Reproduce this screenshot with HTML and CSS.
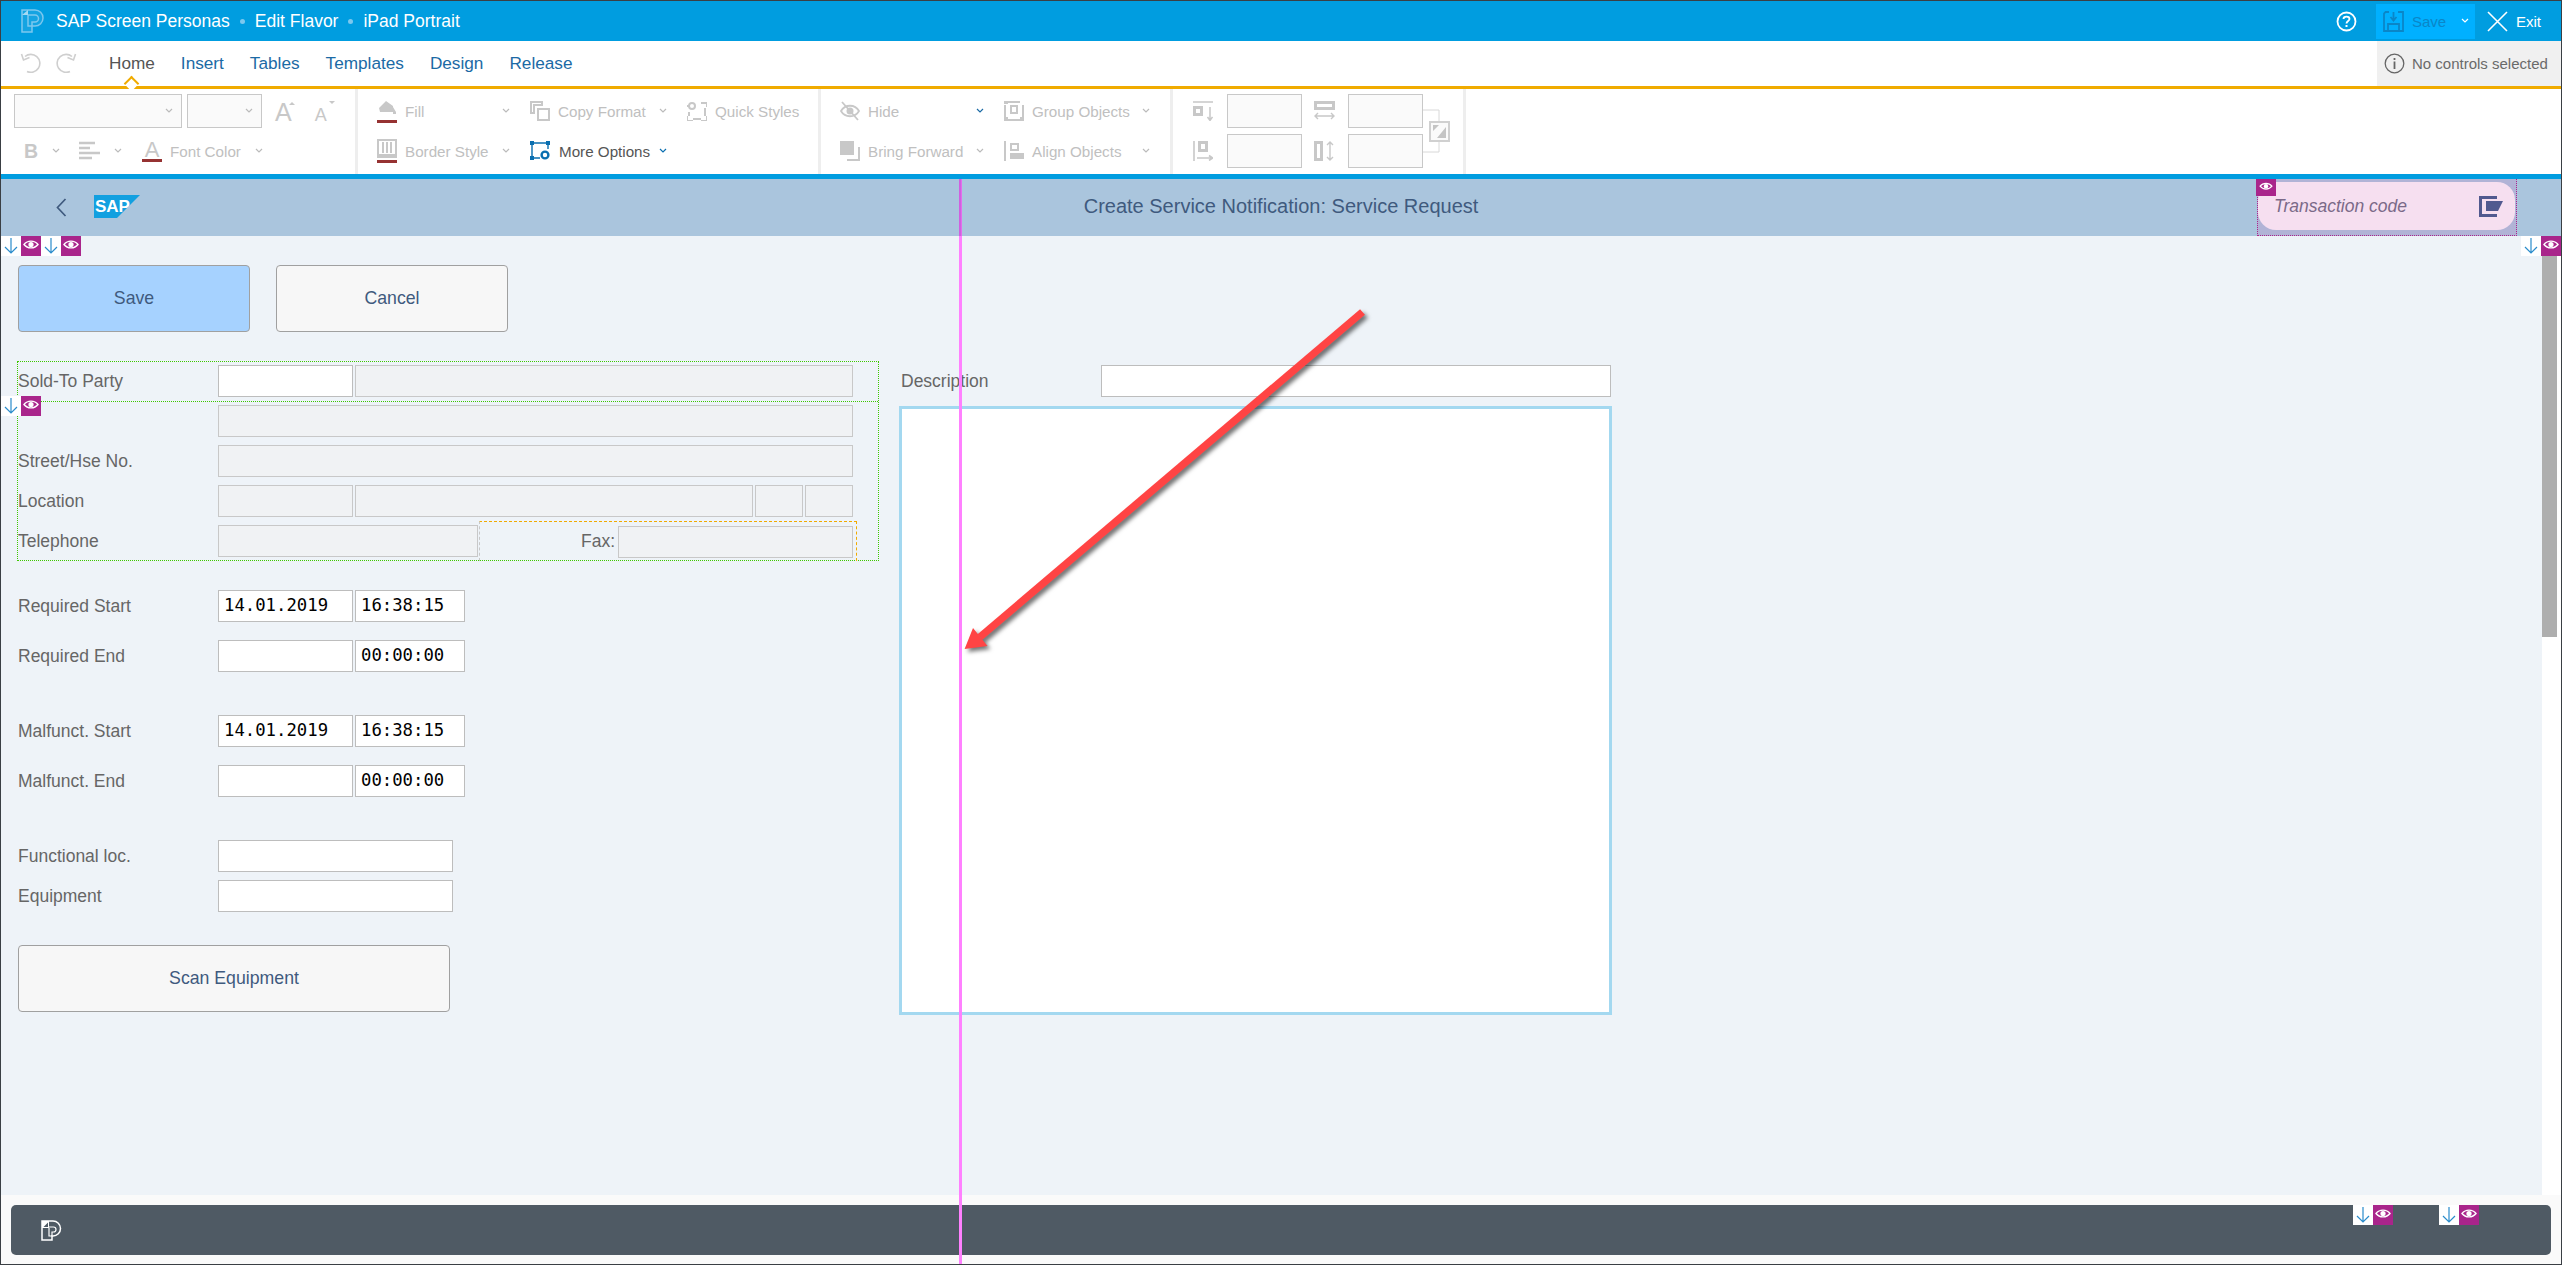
FILE: index.html
```html
<!DOCTYPE html>
<html lang="en">
<head>
    <meta charset="UTF-8">
    <title>SAP Screen Personas - Edit Flavor</title>
    <link rel="stylesheet" href="styles.css">
</head>
<body>
<svg class="defs" width="0" height="0">
    <symbol id="i-eye" viewBox="0 0 20 20">
        <path d="M3 8.5C6.5 4 13.5 4 17 8.5C13.5 13 6.5 13 3 8.5Z" fill="none" stroke="#fff" stroke-width="1.4"/>
        <circle cx="10" cy="8.5" r="2.6" fill="#fff"/>
    </symbol>
    <symbol id="i-down" viewBox="0 0 20 20">
        <path d="M10 2V17M4 11L10 17L16 11" fill="none" stroke="#2a8ccb" stroke-width="1.2"/>
    </symbol>
    <symbol id="i-chev" viewBox="0 0 8 6">
        <path d="M1 1L4 4L7 1" fill="none" stroke="currentColor" stroke-width="1.2"/>
    </symbol>
</svg>

<div class="app">
    <header class="titlebar">
        <svg class="plogo" width="23" height="24" viewBox="0 0 23 24">
            <path d="M1 1H14A8 8 0 0 1 14 17H11V23H1Z" fill="rgba(255,255,255,0.08)" stroke="#7cc8ee" stroke-width="1.5"/>
            <path d="M1 6L7 1V6Z" fill="#a5daf3"/>
            <path d="M7 6H14A3.5 3.5 0 0 1 14 13H11V17M7 6V17H11" fill="none" stroke="#7cc8ee" stroke-width="1.5"/>
        </svg>
        <span class="crumb">SAP Screen Personas</span><span class="dot"></span>
        <span class="crumb">Edit Flavor</span><span class="dot"></span>
        <span class="crumb">iPad Portrait</span>
        <div class="titlebar-right">
            <svg class="help" width="21" height="21" viewBox="0 0 21 21">
                <circle cx="10.5" cy="10.5" r="9" fill="none" stroke="#fff" stroke-width="1.8"/>
                <path d="M7.5 8C7.5 4.8 13.5 4.8 13.5 8C13.5 10 10.5 10 10.5 12.5" fill="none" stroke="#fff" stroke-width="1.8"/>
                <rect x="9.5" y="14" width="2" height="2" fill="#fff"/>
            </svg>
            <div class="savebtn">
                <svg width="21" height="21" viewBox="0 0 21 21">
                    <path d="M6 1H2.5L1 2.5V20H20V1H15M5 20V13H16V20M10.5 1V9M7.5 6L10.5 9.5L13.5 6" fill="none" stroke="#0a86c8" stroke-width="1.8"/>
                </svg>
                <span class="savebtn-text">Save</span>
                <svg class="savebtn-chev" width="8" height="6"><use href="#i-chev"/></svg>
            </div>
            <svg class="exit-x" width="21" height="21" viewBox="0 0 21 21">
                <path d="M1 1L20 20M20 1L1 20" stroke="#fff" stroke-width="1.6"/>
            </svg>
            <span class="exit-text">Exit</span>
        </div>
    </header>

    <nav class="tabs">
        <svg class="undo" width="21" height="20" viewBox="0 0 21 20">
            <path d="M5 3.500A9 9 0 1 1 7 18.500" fill="none" stroke="#cfcfcf" stroke-width="1.6"/>
            <path d="M1.500 1L3.500 7L9.500 4.500" fill="none" stroke="#cfcfcf" stroke-width="1.6"/>
        </svg>
        <svg class="redo" width="21" height="20" viewBox="0 0 21 20">
            <path d="M16 3.500A9 9 0 1 0 14 18.500" fill="none" stroke="#cfcfcf" stroke-width="1.6"/>
            <path d="M19.500 1L17.500 7L11.500 4.500" fill="none" stroke="#cfcfcf" stroke-width="1.6"/>
        </svg>
        <a class="tab tab-active">Home</a>
        <a class="tab">Insert</a>
        <a class="tab">Tables</a>
        <a class="tab">Templates</a>
        <a class="tab">Design</a>
        <a class="tab">Release</a>
        <div class="status">
            <svg width="21" height="21" viewBox="0 0 21 21">
                <circle cx="10.5" cy="10.5" r="9.3" fill="none" stroke="#666" stroke-width="1.3"/>
                <rect x="9.6" y="5" width="1.8" height="2" fill="#666"/>
                <rect x="9.6" y="8.5" width="1.8" height="7.5" fill="#666"/>
            </svg>
            <span>No controls selected</span>
        </div>
    </nav>

    <section class="ribbon">
        <div class="rgroup rgroup-font">
            <div class="rrow">
                <div class="rbox rbox-font"><svg width="8" height="6"><use href="#i-chev"/></svg></div>
                <div class="rbox rbox-size"><svg width="8" height="6"><use href="#i-chev"/></svg></div>
                <span class="glyph-a glyph-up">A</span>
                <span class="glyph-a glyph-small">A</span>
            </div>
            <div class="rrow rrow-tools">
                <span class="glyph-b">B</span>
                <svg class="chev" width="8" height="6"><use href="#i-chev"/></svg>
                <svg class="align-icon" width="21" height="20" viewBox="0 0 21 20">
                    <path d="M0 2H16M0 7H11M0 12H21M0 17H13" stroke="#c8c8c8" stroke-width="2.4"/>
                </svg>
                <svg class="chev" width="8" height="6"><use href="#i-chev"/></svg>
                <span class="color-a">A</span>
                <span class="rtext rtext-color">Font Color</span>
                <svg class="chev" width="8" height="6"><use href="#i-chev"/></svg>
            </div>
        </div>

        <div class="rgroup rgrid rgrid-format">
            <div class="ritem">
                <svg class="ricon" width="20" height="24" viewBox="0 0 20 24">
                    <path d="M2 9L9 2L16 7V13H3ZM16 8L19 13V15H16Z" fill="#c8c8c8"/>
                    <rect y="21" width="20" height="3" fill="#963232"/>
                </svg>
                <span class="rtext">Fill</span>
                <svg class="chev" width="8" height="6"><use href="#i-chev"/></svg>
            </div>
            <div class="ritem">
                <svg class="ricon" width="20" height="20" viewBox="0 0 20 20">
                    <path d="M1 12V1H12V4H4V12ZM8 8H19V19H8Z" fill="none" stroke="#c8c8c8" stroke-width="2"/>
                </svg>
                <span class="rtext">Copy Format</span>
                <svg class="chev" width="8" height="6"><use href="#i-chev"/></svg>
            </div>
            <div class="ritem">
                <svg class="ricon" width="20" height="20" viewBox="0 0 20 20">
                    <path d="M2 5H0M14 2H20V6M18 7V15M20 15V20H14M14 18H6M6 20H0V15M2 15V11" fill="none" stroke="#c8c8c8" stroke-width="2"/>
                    <circle cx="5" cy="5" r="3" fill="none" stroke="#c8c8c8" stroke-width="2"/>
                </svg>
                <span class="rtext">Quick Styles</span>
            </div>
            <div class="ritem">
                <svg class="ricon" width="20" height="24" viewBox="0 0 20 24">
                    <path d="M1 1H19V16H1ZM0 18H20M6 3V14M10 3V14M14 3V14" fill="none" stroke="#c8c8c8" stroke-width="2"/>
                    <rect y="21" width="20" height="3" fill="#963232"/>
                </svg>
                <span class="rtext">Border Style</span>
                <svg class="chev" width="8" height="6"><use href="#i-chev"/></svg>
            </div>
            <div class="ritem ritem-active">
                <svg class="ricon" width="21" height="20" viewBox="0 0 21 20">
                    <path d="M3 2H17M2 3V15M4 17H10M18 3V8" fill="none" stroke="#0a6fb0" stroke-width="1.4"/>
                    <path d="M0 0H4V4H0ZM16 0H20V4H16ZM0 15H4V19H0Z" fill="#0a6fb0"/>
                    <circle cx="15" cy="14" r="3.4" fill="none" stroke="#0a6fb0" stroke-width="2.4"/>
                </svg>
                <span class="rtext">More Options</span>
                <svg class="chev" width="8" height="6"><use href="#i-chev"/></svg>
            </div>
        </div>

        <div class="rgroup rgrid rgrid-arrange">
            <div class="ritem">
                <svg class="ricon" width="20" height="20" viewBox="0 0 20 20">
                    <path d="M1 10C5 3 15 3 19 10C15 17 5 17 1 10ZM2 1L18 19" fill="none" stroke="#c8c8c8" stroke-width="1.8"/>
                    <circle cx="10" cy="10" r="3.5" fill="#c8c8c8"/>
                </svg>
                <span class="rtext">Hide</span>
                <svg class="chev chev-blue" width="8" height="6"><use href="#i-chev"/></svg>
            </div>
            <div class="ritem">
                <svg class="ricon" width="20" height="20" viewBox="0 0 20 20">
                    <path d="M1 4V16M4 1H16M19 4V16M4 19H16M7 5H13V12H7Z" fill="none" stroke="#c8c8c8" stroke-width="2"/>
                    <path d="M0 0H4V3H0ZM0 16H4V20H0ZM16 16H20V20H16Z" fill="#c8c8c8"/>
                </svg>
                <span class="rtext">Group Objects</span>
                <svg class="chev" width="8" height="6"><use href="#i-chev"/></svg>
            </div>
            <div class="ritem">
                <svg class="ricon" width="20" height="20" viewBox="0 0 20 20">
                    <rect width="14" height="14" fill="#c8c8c8"/>
                    <path d="M19 6V19H7" fill="none" stroke="#c8c8c8" stroke-width="2"/>
                </svg>
                <span class="rtext">Bring Forward</span>
                <svg class="chev" width="8" height="6"><use href="#i-chev"/></svg>
            </div>
            <div class="ritem">
                <svg class="ricon" width="20" height="20" viewBox="0 0 20 20">
                    <path d="M1 0V20" stroke="#c8c8c8" stroke-width="2"/>
                    <path d="M7 3H14V9H7Z" fill="none" stroke="#c8c8c8" stroke-width="2"/>
                    <rect x="6" y="12" width="14" height="6" fill="#c8c8c8"/>
                </svg>
                <span class="rtext">Align Objects</span>
                <svg class="chev" width="8" height="6"><use href="#i-chev"/></svg>
            </div>
        </div>

        <div class="rgroup rgroup-size">
            <div class="rrow">
                <svg class="size-icon" width="20" height="20" viewBox="0 0 20 20">
                    <path d="M0 1H20M17 6V19M14.500 16L17 19.500L19.500 16" fill="none" stroke="#c8c8c8" stroke-width="1.5"/>
                    <path d="M0 5H10V15H0ZM3 8V12H7V8Z" fill="#c8c8c8" fill-rule="evenodd"/>
                </svg>
                <div class="rbox rbox-num"></div>
                <svg class="size-icon size-icon-2" width="21" height="20" viewBox="0 0 21 20">
                    <path d="M0 0H21V9H0ZM3 3V6H18V3Z" fill="#c8c8c8" fill-rule="evenodd"/>
                    <path d="M1 15H20M4 12L1 15L4 18M17 12L20 15L17 18" fill="none" stroke="#c8c8c8" stroke-width="1.4"/>
                </svg>
                <div class="rbox rbox-num"></div>
            </div>
            <div class="rrow">
                <svg class="size-icon" width="20" height="20" viewBox="0 0 20 20">
                    <path d="M1 0V20M4 17H19.500M16 14.500L19.500 17L16 19.500" fill="none" stroke="#c8c8c8" stroke-width="1.6"/>
                    <path d="M5 0H15V11H5ZM8 3V8H12V3Z" fill="#c8c8c8" fill-rule="evenodd"/>
                </svg>
                <div class="rbox rbox-num"></div>
                <svg class="size-icon size-icon-2" width="21" height="20" viewBox="0 0 21 20">
                    <path d="M0 0H9V20H0ZM3 3V17H6V3Z" fill="#c8c8c8" fill-rule="evenodd"/>
                    <path d="M16 1V19M13 4L16 1L19 4M13 16L16 19L19 16" fill="none" stroke="#c8c8c8" stroke-width="1.4"/>
                </svg>
                <div class="rbox rbox-num"></div>
            </div>
            <svg class="ratio-link" width="27" height="44" viewBox="0 0 27 44">
                <path d="M0 1H16V12M0 43H16V32" fill="none" stroke="#d8d8d8"/>
                <rect x="7" y="13" width="19" height="19" fill="#fafafa" stroke="#d0d0d0" stroke-width="2"/>
                <path d="M10 16H16L10 22ZM23 18V29H14Z" fill="#c4c4c4"/>
            </svg>
        </div>
    </section>

    <header class="screenhead">
        <div class="screenhead-left">
            <svg width="11" height="19" viewBox="0 0 11 19">
                <path d="M9.500 1L1.500 9.500L9.500 18" fill="none" stroke="#3f5a7e" stroke-width="1.7"/>
            </svg>
            <svg class="saplogo" width="46" height="23" viewBox="0 0 46 23">
                <path d="M0 0H46L23 23H0Z" fill="#12a0e0"/>
                <text x="1" y="17" class="saplogo-text">SAP</text>
            </svg>
        </div>
        <h1 class="screenhead-title">Create Service Notification: Service Request</h1>
        <div class="tcode">
            <div class="tcode-pill">
                <span class="tcode-text">Transaction code</span>
                <svg width="24" height="21" viewBox="0 0 24 21">
                    <path d="M18 1.500H1.500V19.500H18" fill="none" stroke="#51598f" stroke-width="3"/>
                    <path d="M7 5H24L19 15H7Z" fill="#51598f"/>
                </svg>
            </div>
        </div>
    </header>

    <div class="workarea">
        <main class="canvas">
            <div class="col-left">
                <div class="actions">
                    <button class="btn btn-primary">Save</button>
                    <button class="btn">Cancel</button>
                </div>

                <div class="group">
                    <div class="row row-first">
                        <label>Sold-To Party</label>
                        <div class="fld w-135"></div>
                        <div class="fld fld-off w-498"></div>
                    </div>
                    <div class="row">
                        <label></label>
                        <div class="fld fld-off w-635"></div>
                    </div>
                    <div class="row">
                        <label>Street/Hse No.</label>
                        <div class="fld fld-off w-635"></div>
                    </div>
                    <div class="row">
                        <label>Location</label>
                        <div class="fld fld-off w-135"></div>
                        <div class="fld fld-off w-398"></div>
                        <div class="fld fld-off w-48"></div>
                        <div class="fld fld-off w-48"></div>
                    </div>
                    <div class="row">
                        <label>Telephone</label>
                        <div class="fld fld-off w-260"></div>
                        <div class="faxbox">
                            <span class="faxlabel">Fax:</span>
                            <div class="fld fld-off w-235"></div>
                        </div>
                    </div>
                </div>

                <div class="row row-start">
                    <label>Required Start</label>
                    <div class="fld fld-mono w-135">14.01.2019</div>
                    <div class="fld fld-mono w-110">16:38:15</div>
                </div>
                <div class="row row-next">
                    <label>Required End</label>
                    <div class="fld fld-mono w-135"></div>
                    <div class="fld fld-mono w-110">00:00:00</div>
                </div>
                <div class="row row-block">
                    <label>Malfunct. Start</label>
                    <div class="fld fld-mono w-135">14.01.2019</div>
                    <div class="fld fld-mono w-110">16:38:15</div>
                </div>
                <div class="row row-next">
                    <label>Malfunct. End</label>
                    <div class="fld fld-mono w-135"></div>
                    <div class="fld fld-mono w-110">00:00:00</div>
                </div>
                <div class="row row-block">
                    <label>Functional loc.</label>
                    <div class="fld w-235"></div>
                </div>
                <div class="row row-tight">
                    <label>Equipment</label>
                    <div class="fld w-235"></div>
                </div>
                <button class="btn btn-wide">Scan Equipment</button>
            </div>

            <div class="col-right">
                <div class="row">
                    <label class="label-desc">Description</label>
                    <div class="fld w-510"></div>
                </div>
                <div class="notes"></div>
            </div>
        </main>
        <div class="scrolltrack"><div class="scrollthumb"></div></div>
    </div>

    <footer class="footer">
        <div class="footer-bar">
            <svg width="21" height="21" viewBox="0 0 21 21">
                <path d="M1 1H12A7.500 7.500 0 0 1 12 16H11V20H1Z" fill="none" stroke="#fff" stroke-width="1.5"/>
                <path d="M1 1H8V8H1Z" fill="#fff"/>
                <path d="M2.500 7L7 2.500V7Z" fill="#4f5a64"/>
                <path d="M8 8V16H11M8 7H12.500A2.500 2.500 0 0 1 12.500 12H11V16" fill="none" stroke="#fff" stroke-width="1.2"/>
            </svg>
        </div>
    </footer>

    <!-- designer overlays -->
    <div class="guide"></div>

    <div class="mark mark-a"><span class="mark-down"><svg width="20" height="20"><use href="#i-down"/></svg></span><span class="mark-eye"><svg width="20" height="20"><use href="#i-eye"/></svg></span></div>
    <div class="mark mark-b"><span class="mark-down"><svg width="20" height="20"><use href="#i-down"/></svg></span><span class="mark-eye"><svg width="20" height="20"><use href="#i-eye"/></svg></span></div>
    <div class="mark mark-c"><span class="mark-down"><svg width="20" height="20"><use href="#i-down"/></svg></span><span class="mark-eye"><svg width="20" height="20"><use href="#i-eye"/></svg></span></div>
    <div class="mark mark-d"><span class="mark-down"><svg width="20" height="20"><use href="#i-down"/></svg></span><span class="mark-eye"><svg width="20" height="20"><use href="#i-eye"/></svg></span></div>
    <div class="mark mark-e"><span class="mark-down"><svg width="20" height="20"><use href="#i-down"/></svg></span><span class="mark-eye"><svg width="20" height="20"><use href="#i-eye"/></svg></span></div>
    <div class="mark mark-f"><span class="mark-down"><svg width="20" height="20"><use href="#i-down"/></svg></span><span class="mark-eye"><svg width="20" height="20"><use href="#i-eye"/></svg></span></div>
    <div class="mark mark-g"><span class="mark-eye"><svg width="20" height="17"><use href="#i-eye"/></svg></span></div>

    <svg class="callout" width="430" height="370" viewBox="0 0 430 370">
        <path d="M412.500 12L30 337" stroke="#ff4444" stroke-width="7.500" fill="none"/>
        <path d="M14.600 349L23 328L37.500 346Z" fill="#ff4444"/>
    </svg>
</div>
</body>
</html>
```

FILE: styles.css
```css
* {
    box-sizing: border-box;
}
html, body {
    margin: 0;
    height: 100%;
}
body {
    font-family: "Liberation Sans", Arial, sans-serif;
    color: #666;
    overflow: hidden;
}
.defs {
    position: absolute;
}
.app {
    position: relative;
    display: flex;
    flex-direction: column;
    height: 100vh;
    border: 1px solid #3a3f44;
    overflow: hidden;
}

/* title bar */
.titlebar {
    display: flex;
    align-items: center;
    flex: 0 0 40px;
    padding-left: 20px;
    background: #009de0;
    color: #fff;
    font-size: 17.5px;
}
.plogo {
    margin-right: 12px;
}
.dot {
    width: 5px;
    height: 5px;
    margin: 0 10px;
    border-radius: 50%;
    background: #7cc8ee;
}
.titlebar-right {
    display: flex;
    align-items: center;
    margin-left: auto;
    padding-right: 20px;
}
.help {
    margin-right: 19px;
}
.savebtn {
    display: flex;
    align-items: center;
    width: 99px;
    height: 35px;
    margin-right: 12px;
    padding-left: 7px;
    background: #00b0ff;
    color: #fff;
}
.savebtn-text {
    margin-left: 8px;
    color: #0a86c8;
    font-size: 15px;
}
.savebtn-chev {
    margin-left: 15px;
}
.exit-x {
    margin-right: 8px;
}
.exit-text {
    font-size: 15px;
}

/* tabs */
.tabs {
    position: relative;
    display: flex;
    align-items: center;
    flex: 0 0 48px;
    padding: 0 0 1px 19px;
    background: #fff;
    border-bottom: 3px solid #f0ab00;
    font-size: 17.2px;
}
.redo {
    margin-left: 15px;
    margin-right: 32px;
}
.tab {
    margin-right: 26px;
    color: #1b6aa5;
}
.tab-active {
    position: relative;
    color: #555;
}
.tab-active::after {
    content: "";
    position: absolute;
    left: 17px;
    bottom: -15px;
    width: 9px;
    height: 9px;
    background: #fff;
    border-top: 2px solid #f0ab00;
    border-left: 2px solid #f0ab00;
    transform: rotate(45deg);
}
.status {
    display: flex;
    align-items: center;
    align-self: flex-start;
    width: 184px;
    height: 45px;
    margin: 0 0 -1px auto;
    padding-left: 7px;
    background: #f0f0f0;
    color: #6a6a6a;
    font-size: 15px;
}
.status span {
    margin-left: 7px;
    white-space: nowrap;
}

/* ribbon */
.ribbon {
    display: flex;
    flex: 0 0 85px;
    background: #fff;
}
.rgroup {
    padding-top: 5px;
    border-right: 3px solid #eee;
    color: #c0c0c0;
    font-size: 15.2px;
}
.rgroup-font {
    width: 357px;
    padding-left: 13px;
}
.rrow {
    display: flex;
    align-items: center;
    height: 34px;
    margin-bottom: 6px;
}
.rbox {
    display: flex;
    align-items: center;
    justify-content: flex-end;
    height: 34px;
    padding-right: 8px;
    background: #fafafa;
    border: 1px solid #c8c8c8;
    color: #bbb;
}
.rbox-font {
    width: 168px;
    margin-right: 5px;
}
.rbox-size {
    width: 75px;
    margin-right: 13px;
}
.rbox-num {
    width: 75px;
    padding: 0;
}
.glyph-a {
    position: relative;
    color: #c8c8c8;
    font-size: 25px;
}
.glyph-up {
    margin: 3px 23px 0 0;
}
.glyph-small {
    margin-top: 8px;
    font-size: 18px;
}
.glyph-up::after,
.glyph-small::after {
    content: "";
    position: absolute;
    border-left: 3.5px solid transparent;
    border-right: 3.5px solid transparent;
}
.glyph-up::after {
    top: 4px;
    right: -3px;
    border-bottom: 3.5px solid #c8c8c8;
}
.glyph-small::after {
    top: -4px;
    right: -8px;
    border-top: 3.5px solid #c8c8c8;
}
.rrow-tools {
    padding-left: 10px;
}
.glyph-b {
    width: 14px;
    color: #c8c8c8;
    font-size: 19.5px;
    font-weight: bold;
}
.rrow-tools .chev {
    margin-left: 14px;
}
.align-icon {
    margin-left: 19px;
}
.color-a {
    width: 20px;
    height: 22px;
    margin-left: 20px;
    border-bottom: 3px solid #963232;
    color: #c8c8c8;
    font-size: 22px;
    line-height: 19px;
    text-align: center;
}
.rtext {
    white-space: nowrap;
}
.rtext-color {
    margin-left: 8px;
}
.chev {
    flex: none;
    color: #bbb;
}
.chev-blue {
    color: #1b6aa5;
}
.rgrid {
    display: grid;
    grid-template-rows: 34px 34px;
    row-gap: 6px;
    padding-left: 19px;
}
.rgrid-format {
    width: 463px;
    grid-template-columns: 153px 157px 112px;
}
.rgrid-arrange {
    width: 352px;
    grid-template-columns: 164px 166px;
}
.ritem {
    display: flex;
    align-items: center;
    padding-right: 20px;
}
.ricon {
    flex: none;
    margin-right: 8px;
}
.ritem .chev {
    margin-left: auto;
}
.ritem-active {
    color: #555;
}
.ritem-active .chev {
    color: #0a6fb0;
}
.rgroup-size {
    position: relative;
    width: 293px;
    padding-left: 20px;
}
.size-icon {
    flex: none;
    margin-right: 14px;
}
.size-icon-2 {
    margin-left: 12px;
    margin-right: 13px;
}
.ratio-link {
    position: absolute;
    top: 20px;
    left: 250px;
}

/* screen header */
.screenhead {
    display: grid;
    grid-template-columns: 1fr auto 1fr;
    align-items: center;
    flex: 0 0 62px;
    background: #aac5dd;
    border-top: 5px solid #009de0;
}
.screenhead-left {
    display: flex;
    align-items: center;
    padding-left: 55px;
}
.saplogo {
    margin-left: 27px;
    margin-top: -2px;
}
.saplogo-text {
    fill: #fff;
    font-size: 17px;
    font-weight: bold;
}
.screenhead-title {
    margin: 0 0 3px;
    color: #3f5a7e;
    font-size: 20px;
    font-weight: normal;
}
.tcode {
    justify-self: end;
    width: 260px;
    height: 57px;
    margin-right: 44px;
    padding: 3px 1px 5px 0;
    background: #b1b3d6;
    border: 1px dotted #a9258b;
    border-top: 0;
}
.tcode-pill {
    display: flex;
    align-items: center;
    justify-content: space-between;
    height: 48px;
    padding: 0 12px 0 16px;
    background: #f6dff0;
    border-radius: 18px;
}
.tcode-text {
    color: #7b6a88;
    font-size: 17.5px;
    font-style: italic;
}

/* form */
.workarea {
    display: flex;
    flex: 1;
    min-height: 0;
    background: #eef3f8;
}
.canvas {
    display: flex;
    flex: 1;
    padding: 29px 0 0 16px;
}
.col-left {
    width: 882px;
}
.col-right {
    padding-top: 100px;
}
.actions {
    display: flex;
    gap: 26px;
    margin: 0 0 29px 1px;
}
.btn {
    width: 232px;
    height: 67px;
    padding: 0;
    background: #f7f7f7;
    border: 1px solid #a0a0a0;
    border-radius: 4px;
    color: #3f5a7e;
    font-family: inherit;
    font-size: 17.7px;
}
.btn-primary {
    background: #a6d2ff;
}
.btn-wide {
    display: block;
    width: 432px;
    margin: 33px 0 0 1px;
}
.group {
    width: 862px;
    height: 200px;
    padding: 3px 0;
    border: 1px dotted #3ec800;
}
.group .row + .row {
    margin-top: 8px;
}
.group .row-first {
    box-sizing: content-box;
    padding-bottom: 4px;
    border-bottom: 1px dotted #3ec800;
    margin-bottom: -5px;
}
.row {
    display: flex;
    align-items: center;
    gap: 2px;
    height: 32px;
}
.row label {
    flex: 0 0 198px;
    font-size: 17.5px;
    white-space: nowrap;
}
.col-left > .row {
    padding-left: 1px;
}
.row-start {
    margin-top: 29px;
}
.row-next {
    margin-top: 18px;
}
.row-block {
    margin-top: 43px;
}
.row-tight {
    margin-top: 8px;
}
.fld {
    flex: none;
    height: 32px;
    background: #fff;
    border: 1px solid #bdbdbd;
}
.fld-off {
    background: #f0f2f4;
    border-color: #c8c8c8;
}
.fld-mono {
    padding: 0 0 2px 5px;
    color: #000;
    font-family: "DejaVu Sans Mono", "Liberation Mono", monospace;
    font-size: 17.3px;
    line-height: 28px;
}
.w-48 { width: 48px; }
.w-110 { width: 110px; }
.w-135 { width: 135px; }
.w-235 { width: 235px; }
.w-260 { width: 260px; }
.w-398 { width: 398px; }
.w-498 { width: 498px; }
.w-510 { width: 510px; }
.w-635 { width: 635px; }
.faxbox {
    display: flex;
    align-items: center;
    justify-content: flex-end;
    gap: 3px;
    width: 378px;
    height: 40px;
    margin-left: -1px;
    padding-right: 3px;
    border-top: 1px dashed #f0ab00;
    border-right: 1px dashed #f0ab00;
    border-left: 1px dashed #c8c8c8;
}
.faxlabel {
    font-size: 17.5px;
}
.col-right .row label.label-desc {
    flex-basis: 200px;
    padding-left: 2px;
}
.notes {
    width: 713px;
    height: 609px;
    margin-top: 9px;
    background: #fff;
    border: 3px solid #a3d8f0;
}
.scrolltrack {
    flex: 0 0 19px;
    padding-top: 20px;
    background: #fff;
}
.scrollthumb {
    width: 15px;
    height: 381px;
    background: #aeaeae;
}

/* footer */
.footer {
    flex: 0 0 69px;
    padding: 10px 10px 9px;
    background: #fafafa;
}
.footer-bar {
    display: flex;
    align-items: center;
    height: 50px;
    padding-left: 30px;
    background: #4f5a64;
    border-radius: 5px;
}

/* overlays */
.guide {
    position: absolute;
    top: 178px;
    bottom: 0;
    left: 958px;
    width: 3px;
    border-right: 1px solid rgba(255, 128, 255, 0.4);
    background: linear-gradient(#d060e0 57px, #ff80ff 57px);
}
.mark {
    position: absolute;
    display: flex;
    height: 20px;
}
.mark svg {
    display: block;
}
.mark-down,
.mark-eye {
    width: 20px;
    height: 20px;
    background: #fff;
}
.mark-eye {
    background: #a9258b;
}
.mark-a { left: 0; top: 235px; }
.mark-b { left: 40px; top: 235px; }
.mark-c { left: 0; top: 395px; }
.mark-d { left: 2520px; top: 235px; }
.mark-e { left: 2352px; top: 1204px; }
.mark-f { left: 2438px; top: 1204px; }
.mark-g { left: 2255px; top: 178px; }
.mark-g .mark-eye { height: 17px; }
.callout {
    position: absolute;
    left: 949px;
    top: 299px;
    filter: drop-shadow(3px 3px 2px rgba(0, 0, 0, 0.55));
}
```
